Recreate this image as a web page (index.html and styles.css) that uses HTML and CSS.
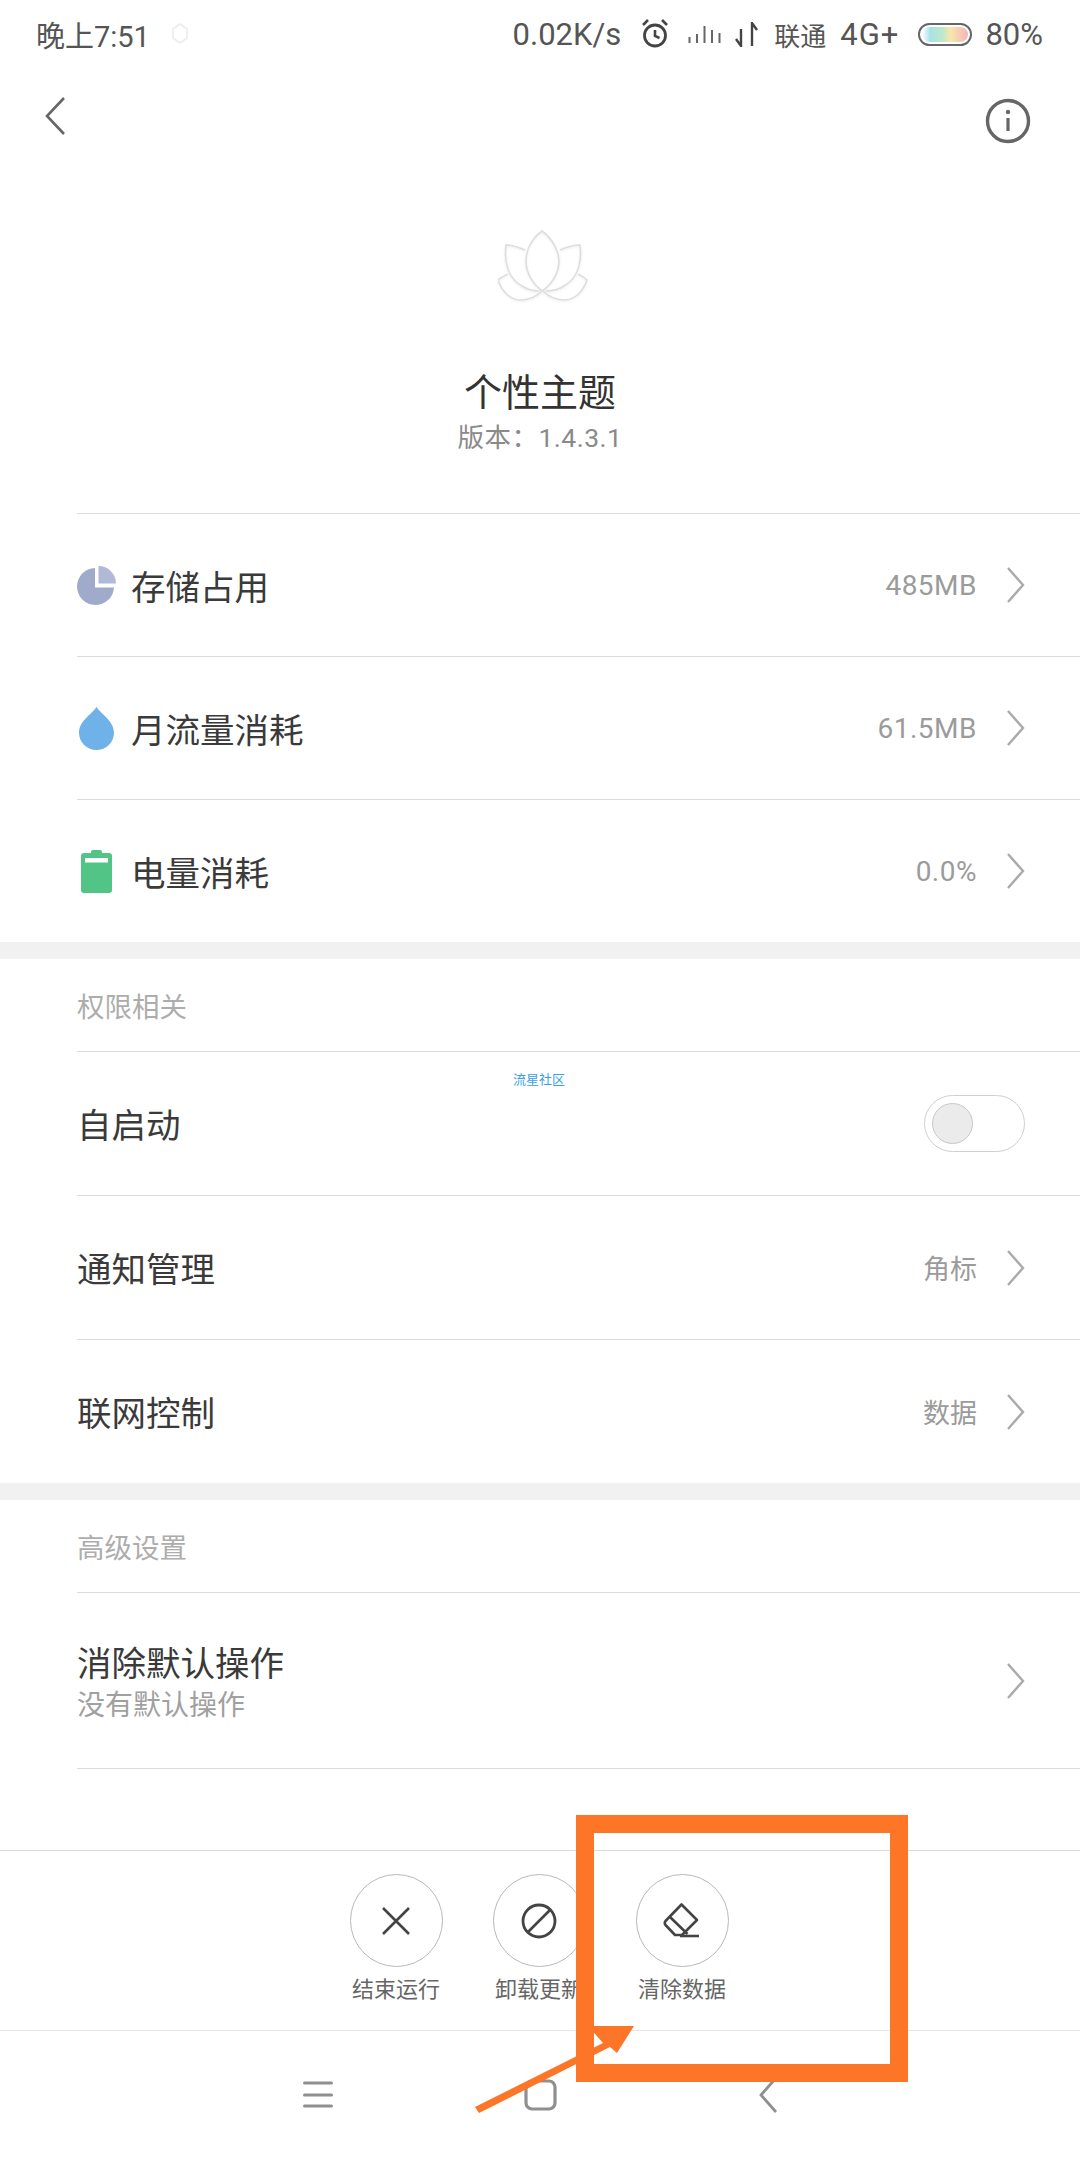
FILE: index.html
```html
<!DOCTYPE html>
<html lang="zh-CN">
<head>
<meta charset="utf-8">
<title>个性主题</title>
<link rel="stylesheet" href="styles.css">
</head>
<body>
<div class="page">
  <div class="status">
    <span class="time">晚上7:51</span>
    <svg class="st-dot" width="22" height="26" viewBox="0 0 22 26"><path d="M11 3 L18 8 L18 17 L11 22 L4 17 L4 8 Z" fill="none" stroke="#eeeeee" stroke-width="2"/></svg>
    <span class="status-right">
      <span class="speed">0.02K/s</span>
      <svg class="st-alarm" width="30" height="30" viewBox="0 0 30 30"><circle cx="15" cy="17.5" r="10.5" fill="none" stroke="#444" stroke-width="2.8"/><path d="M15 12 V18 L19.5 20 M3 7 L8 2 M27 7 L22 2" fill="none" stroke="#444" stroke-width="2.6"/></svg>
      <svg class="st-signal" width="33" height="18" viewBox="0 0 33 18"><path d="M1.5 12 V18 M9 9 V18 M16.5 1 V18 M24 5 V18 M31.5 8 V18" stroke="#666" stroke-width="2" fill="none"/></svg>
      <svg class="st-arrows" width="25" height="25" viewBox="0 0 25 25"><path d="M7 7 V24 L2 17 M18 24 V1 L23 8" fill="none" stroke="#444" stroke-width="2.4"/></svg>
      <span class="carrier">联通</span>
      <span class="net">4G+</span>
      <span class="battery"><span class="battery-fill"></span></span>
      <span class="percent">80%</span>
    </span>
  </div>

  <div class="toolbar">
    <svg class="tool-back" width="20" height="38" viewBox="0 0 20 38"><path d="M19 1 L2 19 L19 37" fill="none" stroke="#666" stroke-width="2.6"/></svg>
    <svg width="46" height="46" viewBox="0 0 46 46"><circle cx="23" cy="23" r="20.5" fill="none" stroke="#666" stroke-width="3.4"/><circle cx="23" cy="14" r="2.2" fill="#666"/><path d="M23 20 V33" stroke="#666" stroke-width="3.2"/></svg>
  </div>

  <div class="app">
    <svg class="lotus" width="90" height="72" viewBox="0 0 90 72">
      <g fill="none" stroke="#dedede" stroke-width="1.6">
        <path d="M44 1 C32 10 28 22 28 31 C28 44 36 55 44 61 C53 55 61 44 61 31 C61 22 55 9 44 1 Z"/>
        <path d="M27 20 C20 17 13 15 8 15 C6 30 9 48 24 56 C30 60 37 61 41 61"/>
        <path d="M62 20 C69 17 76 15 82 15 C84 30 81 48 66 56 C60 60 52 61 48 61"/>
        <path d="M10 44 C6 46 2 48 0 50 C4 62 13 70 22 70 C31 70 39 66 44 61"/>
        <path d="M80 44 C84 46 87 48 89 50 C85 62 76 70 67 70 C58 70 50 66 45 61"/>
      </g>
    </svg>
    <div class="app-name">个性主题</div>
    <div class="app-version">版本：1.4.3.1</div>
  </div>

  <div class="row">
    <svg class="row-icon row-icon-pie" width="39" height="39" viewBox="0 0 39 39"><path d="M18 2 A18.5 18.5 0 1 0 37 21.5 L18 21.5 Z" fill="#a0aaca"/><path d="M21.5 0 A17.5 17.5 0 0 1 39 17.5 L21.5 17.5 Z" fill="#b0b9d6"/></svg>
    <span class="row-label">存储占用</span>
    <span class="row-value">485MB</span>
    <svg class="chev" width="18" height="36" viewBox="0 0 18 36"><path d="M1 1 L16 18 L1 35" fill="none" stroke="#aaa" stroke-width="2.4"/></svg>
  </div>
  <div class="row">
    <svg class="row-icon" width="37" height="43" viewBox="0 0 37 43"><path d="M18.5 0 C24 8 36 14 36 26 A17.5 17 0 0 1 1 26 C1 14 13 8 18.5 0 Z" fill="#6fb2ea"/></svg>
    <span class="row-label">月流量消耗</span>
    <span class="row-value">61.5MB</span>
    <svg class="chev" width="18" height="36" viewBox="0 0 18 36"><path d="M1 1 L16 18 L1 35" fill="none" stroke="#aaa" stroke-width="2.4"/></svg>
  </div>
  <div class="row">
    <svg class="row-icon" width="37" height="43" viewBox="0 0 37 43"><rect x="13" y="0" width="11" height="6" rx="2" fill="#52c486"/><rect x="3" y="3" width="31" height="40" rx="3" fill="#52c486"/><rect x="7" y="8" width="23" height="4.5" fill="#fff"/></svg>
    <span class="row-label">电量消耗</span>
    <span class="row-value">0.0%</span>
    <svg class="chev" width="18" height="36" viewBox="0 0 18 36"><path d="M1 1 L16 18 L1 35" fill="none" stroke="#aaa" stroke-width="2.4"/></svg>
  </div>

  <div class="band"></div>
  <div class="section">权限相关</div>

  <div class="row row-b">
    <span class="row-label">自启动</span>
    <span class="toggle"><span class="knob"></span></span>
  </div>
  <div class="row row-b">
    <span class="row-label">通知管理</span>
    <span class="row-value row-value-cjk">角标</span>
    <svg class="chev" width="18" height="36" viewBox="0 0 18 36"><path d="M1 1 L16 18 L1 35" fill="none" stroke="#aaa" stroke-width="2.4"/></svg>
  </div>
  <div class="row row-b">
    <span class="row-label">联网控制</span>
    <span class="row-value row-value-cjk">数据</span>
    <svg class="chev" width="18" height="36" viewBox="0 0 18 36"><path d="M1 1 L16 18 L1 35" fill="none" stroke="#aaa" stroke-width="2.4"/></svg>
  </div>

  <div class="band"></div>
  <div class="section">高级设置</div>

  <div class="row row-tall">
    <span class="row-text">
      <span class="row-label">消除默认操作</span>
      <span class="row-sub">没有默认操作</span>
    </span>
    <svg class="chev" width="18" height="36" viewBox="0 0 18 36"><path d="M1 1 L16 18 L1 35" fill="none" stroke="#aaa" stroke-width="2.4"/></svg>
  </div>

  <div class="actions">
    <div class="action">
      <span class="action-circle"><svg width="40" height="40" viewBox="0 0 40 40"><path d="M7 7 L33 33 M33 7 L7 33" stroke="#444" stroke-width="2.6" fill="none"/></svg></span>
      <span class="action-label">结束运行</span>
    </div>
    <div class="action">
      <span class="action-circle"><svg width="40" height="40" viewBox="0 0 40 40"><circle cx="20" cy="20" r="16" fill="none" stroke="#444" stroke-width="2.8"/><path d="M9 31 L31 9" stroke="#444" stroke-width="2.6"/></svg></span>
      <span class="action-label">卸载更新</span>
    </div>
    <div class="action">
      <span class="action-circle"><svg width="40" height="40" viewBox="0 0 40 40"><path d="M19.5 3.5 L35 19 L20 34 L13 34 L3.5 24 Q2 22 3.5 20 Z M8 16 L25.5 33" fill="none" stroke="#444" stroke-width="2.6" stroke-linejoin="round"/><path d="M18 35 H37" stroke="#444" stroke-width="2.6"/></svg></span>
      <span class="action-label">清除数据</span>
    </div>
  </div>

  <div class="nav">
    <svg width="30" height="27" viewBox="0 0 30 27"><path d="M1.5 2 H28.5 M1.5 14 H28.5 M1.5 25 H28.5" stroke="#8f8f8f" stroke-width="3" stroke-linecap="round"/></svg>
    <svg class="nav-home" width="33" height="32" viewBox="0 0 33 32"><rect x="2" y="2" width="29" height="28" rx="6" fill="none" stroke="#8f8f8f" stroke-width="3.2"/></svg>
    <svg class="nav-back" width="18" height="36" viewBox="0 0 18 36"><path d="M17 1 L2 18 L17 35" fill="none" stroke="#8f8f8f" stroke-width="2.8"/></svg>
  </div>

  <span class="watermark">流星社区</span>
  <div class="mark-box"></div>
  <svg class="mark-arrow" width="170" height="95" viewBox="0 0 170 95"><path d="M0 81 L128 17 L113 0 L159 0 L142 27 L135 21 L4 87 Z" fill="#fd7628" transform="translate(8 0)"/></svg>
</div>
</body>
</html>
```

FILE: styles.css
```css
* { box-sizing: border-box; }
html, body { margin: 0; padding: 0; background: #fff; }
body { font-family: Roboto, "Noto Sans CJK SC", sans-serif; color: #333; }
svg { display: block; flex: none; }

.page { position: relative; width: 1080px; height: 2160px; overflow: hidden; background: #fff; }

.status { height: 68px; display: flex; align-items: center; padding: 0 37px 0 36px; font-size: 31px; color: #555; }
.time { width: 133px; white-space: nowrap; font-size: 29px; }
.status-right { margin-left: auto; display: flex; align-items: center; white-space: nowrap; }
.speed { margin-right: 19px; }
.st-alarm { margin-right: 18px; margin-top: -3px; }
.st-signal { margin-right: 13px; }
.st-arrows { margin-right: 15px; }
.carrier { margin-right: 14px; font-size: 26px; }
.net { margin-right: 19px; letter-spacing: 1px; }
.battery { width: 54px; height: 23px; border: 2px solid #666; border-radius: 12px; padding: 2px; margin-right: 13px; display: block; }
.battery-fill { display: block; width: 100%; height: 100%; border-radius: 8px; background: linear-gradient(90deg, #fff 0%, #a6e3e6 18%, #bfe8c9 45%, #f8e6ae 62%, #f5b4b8 100%); }

.toolbar { height: 106px; display: flex; align-items: center; justify-content: space-between; padding: 0 49px 0 45px; }
.tool-back { margin-bottom: 10px; }

.app { height: 339px; display: flex; flex-direction: column; align-items: center; padding-top: 56px; }
.lotus { margin-bottom: 66px; margin-left: 5px; filter: drop-shadow(0 1px 1px rgba(0, 0, 0, .08)); }
.app-name { font-size: 38px; line-height: 50px; color: #333; }
.app-version { font-size: 26.5px; line-height: 34px; margin-top: 3px; color: #8a8a8a; letter-spacing: .5px; }

.row { margin-left: 77px; padding-right: 55px; height: 143px; display: flex; align-items: center; border-top: 1px solid #dcdcdc; }
.row-b { height: 144px; }
.row-tall { height: 177px; border-bottom: 1px solid #dcdcdc; }
.row-icon { margin-left: 1px; margin-right: 16px; }
.row-icon-pie { margin-left: 0; margin-right: 15px; }
.row-label { font-size: 34.5px; line-height: 46px; padding-top: 5px; color: #3a3a3a; white-space: nowrap; }
.row-value { margin-left: auto; font-size: 28px; letter-spacing: .5px; color: #9b9b9b; white-space: nowrap; }
.row-value-cjk { font-size: 27px; letter-spacing: 0; }
.row-text { display: flex; flex-direction: column; margin-right: auto; }
.row-sub { font-size: 28px; line-height: 38px; color: #a0a0a0; }
.chev { margin-left: 30px; }
.row-tall .chev { margin-left: 0; }

.toggle { margin-left: auto; width: 101px; height: 57px; border: 1.5px solid #cfcfcf; border-radius: 29px; display: flex; align-items: center; padding-left: 7px; }
.knob { width: 41px; height: 41px; border-radius: 50%; background: #ebebeb; border: 1px solid #c8c8c8; }

.band { height: 17px; background: #f1f1f1; }
.section { height: 92px; margin-left: 77px; display: flex; align-items: center; font-size: 27.5px; color: #adadad; }

.actions { margin-top: 81px; height: 181px; border-top: 1px solid #dcdcdc; border-bottom: 1px solid #e6e6e6; display: flex; justify-content: center; gap: 51px; padding-top: 23px; padding-right: 2px; }
.action { width: 92px; display: flex; flex-direction: column; align-items: center; }
.action-circle { width: 93px; height: 93px; flex: none; border-radius: 50%; border: 1px solid #b9b9b9; display: flex; align-items: center; justify-content: center; }
.action-label { margin-top: 8px; font-size: 22px; line-height: 30px; color: #666; white-space: nowrap; }

.nav { height: 129px; display: flex; align-items: center; padding-left: 303px; padding-bottom: 2px; }
.nav-home { margin-left: 191px; }
.nav-back { margin-left: 202px; }

.watermark { position: absolute; left: 513px; top: 1072px; font-size: 13px; line-height: 16px; color: #3a9fe8; white-space: nowrap; }
.mark-box { position: absolute; left: 576px; top: 1815px; width: 332px; height: 267px; border: 18px solid #fd7628; }
.mark-arrow { position: absolute; left: 467px; top: 2026px; }
```
